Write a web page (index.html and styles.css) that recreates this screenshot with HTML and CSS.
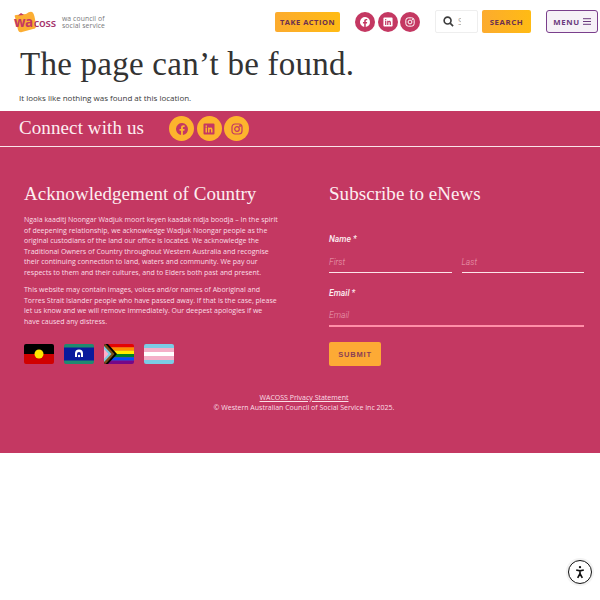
FILE: index.html
```html
<!DOCTYPE html>
<html lang="en">
<head>
<meta charset="utf-8">
<title>Page not found – WACOSS</title>
<link rel="stylesheet" href="styles.css">
</head>
<body>
<header class="site-header">
  <a class="logo" href="#">
    <span class="logo-mark">
      <svg class="logo-blob" width="24" height="22" viewBox="0 0 24 22"><path d="M2 6 Q1 4 3 4 L13 3 Q17 0 19 1 Q21 2 22 8 L23 15 Q23 18 20 18 L9 21 Q6 22 5 19 Z" fill="#fcae33"/><path d="M5 4.500 L8 2 L11 4 Z" fill="#c43862"/></svg>
      <span class="logo-wa">wa</span><span class="logo-coss">coss</span>
    </span>
    <span class="logo-tag">wa council of<br>social service</span>
  </a>
  <a class="btn take-action" href="#">TAKE ACTION</a>
  <div class="socials head-socials">
    <a class="circle" href="#"><svg width="10" height="10" viewBox="0 0 24 24"><path fill="#fff" d="M24 12a12 12 0 1 0-13.900 11.900v-8.400H7.100V12h3V9.400c0-3 1.800-4.700 4.500-4.700 1.300 0 2.700.2 2.700.2v3h-1.500c-1.500 0-2 .9-2 1.900V12h3.400l-.5 3.500h-2.900v8.400A12 12 0 0 0 24 12z"/></svg></a>
    <a class="circle" href="#"><svg width="10" height="10" viewBox="0 0 24 24"><path fill="#fff" fill-rule="evenodd" d="M3 1h18a2 2 0 0 1 2 2v18a2 2 0 0 1-2 2H3a2 2 0 0 1-2-2V3a2 2 0 0 1 2-2zm2 8v10h3V9zm1.500-4.500a1.700 1.700 0 1 0 0 3.400 1.700 1.700 0 0 0 0-3.400zM10 9v10h3v-5c0-3 3-3 3 0v5h3v-6c0-5-5-5-6-3V9z"/></svg></a>
    <a class="circle" href="#"><svg width="10" height="10" viewBox="0 0 24 24" fill="none" stroke="#fff" stroke-width="2.400"><rect x="2" y="2" width="20" height="20" rx="6"/><circle cx="12" cy="12" r="4.600"/><circle cx="18" cy="6" r=".8" fill="#fff"/></svg></a>
  </div>
  <form class="search">
    <div class="search-box">
      <svg width="11" height="11" viewBox="0 0 24 24" fill="none" stroke="#3d3d3d" stroke-width="3.600"><circle cx="10" cy="10" r="7.500"/><path d="M15.500 15.500 22 22"/></svg>
      <span class="search-ph">S</span>
    </div>
    <button class="btn search-btn" type="button">SEARCH</button>
  </form>
  <button class="menu-btn" type="button">MENU <svg width="8" height="7" viewBox="0 0 8 7" fill="none" stroke="#6b3a7d" stroke-width="1"><path d="M0 .7h8M0 3.500h8M0 6.300h8"/></svg></button>
</header>

<main class="main">
  <h1 class="page-title">The page can’t be found.</h1>
  <p class="page-text">It looks like nothing was found at this location.</p>
</main>

<footer class="footer">
  <section class="connect">
    <h2 class="connect-title">Connect with us</h2>
    <div class="socials connect-socials">
      <a class="circle amber" href="#"><svg width="12" height="12" viewBox="0 0 24 24"><path fill="#c43862" d="M24 12a12 12 0 1 0-13.900 11.900v-8.400H7.100V12h3V9.400c0-3 1.800-4.700 4.500-4.700 1.300 0 2.700.2 2.700.2v3h-1.500c-1.500 0-2 .9-2 1.900V12h3.400l-.5 3.500h-2.900v8.400A12 12 0 0 0 24 12z"/></svg></a>
      <a class="circle amber" href="#"><svg width="12" height="12" viewBox="0 0 24 24"><path fill="#c43862" fill-rule="evenodd" d="M3 1h18a2 2 0 0 1 2 2v18a2 2 0 0 1-2 2H3a2 2 0 0 1-2-2V3a2 2 0 0 1 2-2zm2 8v10h3V9zm1.500-4.500a1.700 1.700 0 1 0 0 3.400 1.700 1.700 0 0 0 0-3.400zM10 9v10h3v-5c0-3 3-3 3 0v5h3v-6c0-5-5-5-6-3V9z"/></svg></a>
      <a class="circle amber" href="#"><svg width="12" height="12" viewBox="0 0 24 24" fill="none" stroke="#c43862" stroke-width="2.400"><rect x="2" y="2" width="20" height="20" rx="6"/><circle cx="12" cy="12" r="4.600"/><circle cx="18" cy="6" r=".8" fill="#c43862"/></svg></a>
    </div>
  </section>

  <section class="columns">
    <div class="col-ack">
      <h2 class="col-title">Acknowledgement of Country</h2>
      <p class="ack-text">Ngala kaaditj Noongar Wadjuk moort keyen kaadak nidja boodja – In the spirit of deepening relationship, we acknowledge Wadjuk Noongar people as the original custodians of the land our office is located. We acknowledge the Traditional Owners of Country throughout Western Australia and recognise their continuing connection to land, waters and community. We pay our respects to them and their cultures, and to Elders both past and present.</p>
      <p class="ack-text">This website may contain images, voices and/or names of Aboriginal and Torres Strait Islander people who have passed away. If that is the case, please let us know and we will remove immediately. Our deepest apologies if we have caused any distress.</p>
      <div class="flags">
        <svg class="flag" viewBox="0 0 30 20"><rect width="30" height="10" fill="#000"/><rect y="10" width="30" height="10" fill="#d10000"/><circle cx="15" cy="10" r="4.500" fill="#ffe600"/></svg>
        <svg class="flag" viewBox="0 0 30 20"><rect width="30" height="20" fill="#1f8a70"/><rect y="3.500" width="30" height="13" fill="#0a1a9c"/><path d="M11 13 V9.500 a4 4 0 0 1 8 0 V13 h-2 V10 a2 2 0 0 0-4 0 V13z" fill="#fff"/><circle cx="15" cy="12" r="1.200" fill="#fff"/></svg>
        <svg class="flag" viewBox="0 0 30 20"><rect width="30" height="3.400" fill="#e40303"/><rect y="3.300" width="30" height="3.400" fill="#ff8c00"/><rect y="6.600" width="30" height="3.400" fill="#ffed00"/><rect y="10" width="30" height="3.400" fill="#008026"/><rect y="13.300" width="30" height="3.400" fill="#004dff"/><rect y="16.600" width="30" height="3.400" fill="#750787"/><path d="M0 0 H4 L13 10 L4 20 H0z" fill="#000"/><path d="M0 0 H1.500 L10.500 10 L1.500 20 H0z" fill="#784f17"/><path d="M0 2 L7.500 10 L0 18z" fill="#7bcce5"/><path d="M0 5 L4.500 10 L0 15z" fill="#ffafc8"/></svg>
        <svg class="flag" viewBox="0 0 30 20"><rect width="30" height="20" fill="#7bcce5"/><rect y="4" width="30" height="12" fill="#f4afc8"/><rect y="8" width="30" height="4" fill="#fff"/></svg>
      </div>
    </div>
    <form class="col-form">
      <h2 class="col-title form-title">Subscribe to eNews</h2>
      <div class="field-label">Name *</div>
      <div class="name-row">
        <div class="input">First</div>
        <div class="input">Last</div>
      </div>
      <div class="field-label email-label">Email *</div>
      <div class="input input-email">Email</div>
      <button class="submit" type="button">SUBMIT</button>
    </form>
  </section>

  <section class="legal">
    <a class="legal-link" href="#">WACOSS Privacy Statement</a><br>
    © Western Australian Council of Social Service Inc 2025.
  </section>
</footer>

<button class="a11y" type="button" aria-label="Accessibility">
  <svg width="14" height="14" viewBox="0 0 24 24" fill="none" stroke="#111" stroke-width="2.800"><circle cx="12" cy="3.500" r="2" fill="#111" stroke="none"/><path d="M5.500 8.500 12 10l6.500-1.500M12 10v5M12 15l-4 7M12 15l4 7"/></svg>
</button>
</body>
</html>
```
FILE: styles.css
```css
* { box-sizing: border-box; }
html, body { margin: 0; padding: 0; background: #fff; }
body { font-family: "Open Sans", sans-serif; color: #3a3a3a; }
a { text-decoration: none; color: inherit; }

.site-header { display: flex; align-items: center; height: 43px; padding: 0 2px 0 13px; }
.logo { display: flex; align-items: center; gap: 5px; margin-right: auto; }
.logo-mark { position: relative; display: flex; align-items: baseline; width: 44px; height: 22px; padding: 4px 0 0 1px; line-height: 14px; white-space: nowrap; }
.logo-blob { position: absolute; left: 0; top: 0; }
.logo-wa { position: relative; font-size: 13.500px; font-weight: 700; color: #c43862; letter-spacing: -.5px; }
.logo-coss { position: relative; font-size: 11px; font-weight: 600; color: #a5336b; margin-left: 1px; letter-spacing: -.2px; }
.logo-tag { font-size: 6.800px; line-height: 7px; color: #77777a; letter-spacing: .1px; white-space: nowrap; }

.btn { display: flex; align-items: center; justify-content: center; background: linear-gradient(90deg, #fcab2e, #ffbb14); border: 0; border-radius: 2px; color: #6b2f50; font-family: "Open Sans", sans-serif; font-weight: 700; }
.take-action { width: 65px; height: 20px; font-size: 7.500px; letter-spacing: .5px; margin-right: 15px; }

.socials { display: flex; }
.circle { display: flex; align-items: center; justify-content: center; border-radius: 50%; background: #c43862; }
.head-socials { gap: 2.500px; margin-right: 15px; }
.head-socials .circle { width: 20px; height: 20px; }

.search { display: flex; align-items: center; gap: 4px; margin-right: 15px; }
.search-box { display: flex; align-items: center; gap: 4px; width: 43px; height: 23px; padding-left: 7px; background: #fff; border: 1px solid #eee; border-radius: 2px; }
.search-ph { width: 3px; overflow: hidden; font-size: 9px; color: #aaa; }
.search-btn { width: 49px; height: 23px; font-size: 7.800px; letter-spacing: .6px; padding: 0; }
.menu-btn { display: flex; align-items: center; justify-content: center; gap: 3px; width: 52px; height: 23px; padding: 0; background: #f6f1f7; border: 1px solid #7a3f8c; border-radius: 3px; color: #6b3a7d; font-family: "Open Sans", sans-serif; font-size: 7.800px; font-weight: 700; letter-spacing: .6px; }

.main { height: 68px; padding: 3px 19px 0; }
.page-title { margin: 0 0 0 1px; font-family: "Liberation Serif", serif; font-size: 33px; font-weight: 400; line-height: 37px; letter-spacing: .25px; color: #333; }
.page-text { margin: 9px 0 0; font-size: 8px; line-height: 12px; color: #3a3a3a; }

.footer { height: 342px; background: #c43862; color: #fbe4ea; }
.connect { display: flex; align-items: center; height: 36px; padding: 0 0 0 19px; border-bottom: 1px solid #fbe4ea; }
.connect-title { margin: 0 25px 2px 0; width: 125px; font-family: "Liberation Serif", serif; font-size: 19px; font-weight: 400; letter-spacing: .1px; color: #fdeef1; white-space: nowrap; }
.connect-socials { gap: 2.500px; }
.amber.circle { width: 25px; height: 25px; background: #fdb42d; }

.columns { display: flex; padding: 35px 16px 0 24px; }
.col-ack { width: 305px; }
.col-title { margin: 0; font-family: "Liberation Serif", serif; font-size: 19px; font-weight: 400; line-height: 24px; letter-spacing: .05px; color: #fdeef1; }
.ack-text { width: 254px; margin: 0 0 7px; font-size: 7px; line-height: 10.500px; color: #fbdfe6; }
.col-title + .ack-text { margin-top: 9px; }
.flags { display: flex; gap: 10px; margin-top: 17px; }
.flag { display: block; width: 30px; height: 20px; border-radius: 2px; }

.col-form { width: 255px; }
.form-title { margin-bottom: 27px; }
.field-label { font-family: Roboto, sans-serif; font-style: italic; font-weight: 500; font-size: 8.500px; line-height: 12px; color: #fdeef1; }
.name-row { display: flex; gap: 10px; margin-top: 7px; }
.name-row .input { flex: 1; }
.input { height: 21px; padding-top: 4px; border-bottom: 1px solid #fde5ea; font-family: Roboto, sans-serif; font-style: italic; font-weight: 300; font-size: 8.500px; line-height: 12px; color: #eba0b4; }
.email-label { margin-top: 14px; }
.input-email { height: 21px; margin-top: 7px; padding-top: 3px; border-bottom: 2px solid #ff8fa8; }
.submit { display: block; width: 52px; height: 24px; margin-top: 15px; padding: 0; background: #fdaa35; border: 0; border-radius: 2px; color: #8a3f55; font-family: "Liberation Sans", sans-serif; font-size: 7.500px; font-weight: 700; letter-spacing: .8px; }

.legal { margin-top: 27px; padding-left: 8px; text-align: center; font-size: 7px; line-height: 10px; color: #fbdfe6; }
.legal-link { text-decoration: underline; }

.a11y { position: fixed; right: 8px; bottom: 16px; display: flex; align-items: center; justify-content: center; width: 24px; height: 24px; padding: 0; background: #fff; border: 1.500px solid #111; border-radius: 50%; box-shadow: 0 0 0 2px #f3f3f3; }
```
